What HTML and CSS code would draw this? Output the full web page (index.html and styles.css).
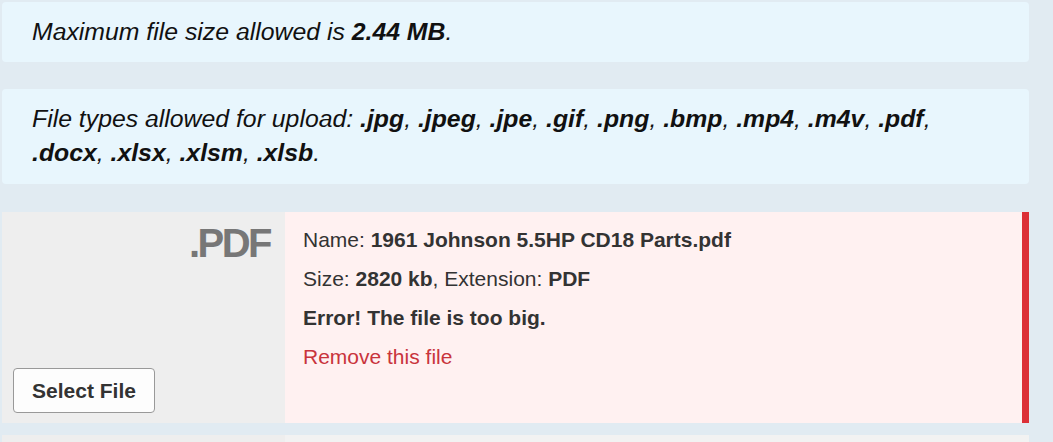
FILE: index.html
```html
<!DOCTYPE html>
<html lang="en">
<head>
  <meta charset="UTF-8" />
  <title>Upload Files</title>
  <link rel="stylesheet" href="styles.css">
</head>
<body>

<div class="uploader">
  <div class="notice">
    <p>Maximum file size allowed is <b>2.44 MB</b>.</p>
  </div>

  <div class="notice">
    <p>File types allowed for upload: <b>.jpg</b>, <b>.jpeg</b>, <b>.jpe</b>, <b>.gif</b>, <b>.png</b>, <b>.bmp</b>, <b>.mp4</b>, <b>.m4v</b>, <b>.pdf</b>, <b>.docx</b>, <b>.xlsx</b>, <b>.xlsm</b>, <b>.xlsb</b>.</p>
  </div>

  <!-- File rows -->
  <div class="file-row has-error">
    <div class="file-side">
      <div class="file-ext">.PDF</div>
      <button type="button" class="select-btn">Select File</button>
    </div>
    <div class="file-info">
      <p>Name: <b>1961 Johnson 5.5HP CD18 Parts.pdf</b></p>
      <p>Size: <b>2820 kb</b>, Extension: <b>PDF</b></p>
      <p><b>Error! The file is too big.</b></p>
      <p><a href="#" class="remove-link">Remove this file</a></p>
    </div>
  </div>

  <div class="file-row">
    <div class="file-side"></div>
    <div class="file-info"></div>
  </div>
</div>

</body>
</html>
```

FILE: styles.css
```css
/* Page */
body {
  margin: 0;
  background: #e1ebf2;
  font-family: "Liberation Sans", Arial, sans-serif;
  color: #333;
}

.uploader {
  width: 1027px;
  padding: 2px;
  display: flex;
  flex-direction: column;
}

/* Notices */
.notice {
  background: #e8f6fd;
  border-radius: 4px;
  padding: 13px 30px;
  margin-bottom: 27px;
}

.notice + .notice {
  padding-bottom: 14px;
  margin-bottom: 28px;
}

.notice p {
  margin: 0;
  font-size: 24.8px;
  line-height: 34px;
  font-style: italic;
  color: #111;
}

/* File rows */
.file-row {
  display: flex;
  height: 211px;
  margin-bottom: 12px;
}

.file-side {
  width: 283px;
  background: #eeeeee;
  display: flex;
  flex-direction: column;
  justify-content: space-between;
  align-items: flex-start;
  padding: 9px 11px 10px 11px;
  box-sizing: border-box;
}

.file-ext {
  align-self: flex-end;
  font-size: 40px;
  font-weight: bold;
  color: #777;
  letter-spacing: -2.5px;
  line-height: 44px;
  padding-right: 4px;
}

.select-btn {
  font-family: "Liberation Sans", Arial, sans-serif;
  font-size: 21px;
  font-weight: bold;
  color: #333;
  background: #fdfdfd;
  border: 1px solid #999;
  border-radius: 4px;
  width: 142px;
  height: 45px;
  cursor: pointer;
}

.file-info {
  flex: 1;
  background: #f2f2f2;
  padding: 14px 18px;
}

.has-error .file-info {
  background: #fff1f1;
  border-right: 7px solid #dc3037;
}

.file-info p {
  margin: 0 0 11px;
  font-size: 21px;
  line-height: 28px;
}

.remove-link {
  color: #c9343c;
  text-decoration: none;
}
```
